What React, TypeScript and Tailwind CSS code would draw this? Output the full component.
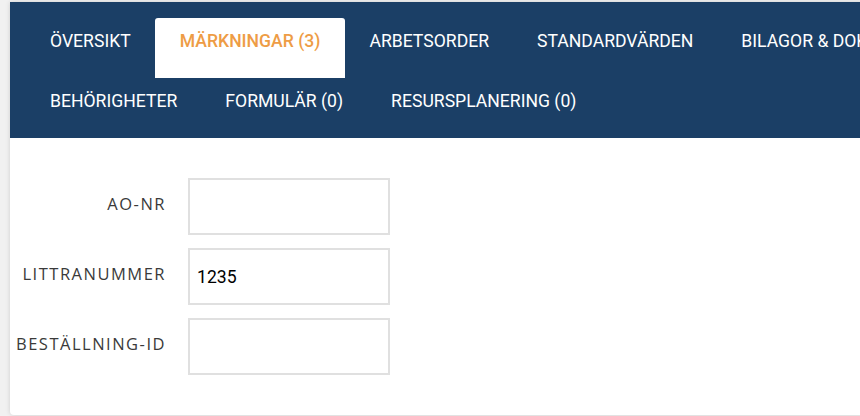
const TABS = [
  { label: 'ÖVERSIKT' },
  { label: 'MÄRKNINGAR (3)', active: true },
  { label: 'ARBETSORDER' },
  { label: 'STANDARDVÄRDEN' },
  { label: 'BILAGOR & DOKUMENT (2)' },
  { label: 'BEHÖRIGHETER' },
  { label: 'FORMULÄR (0)' },
  { label: 'RESURSPLANERING (0)' },
]

const FIELDS = [
  { label: 'AO-NR', value: '' },
  { label: 'LITTRANUMMER', value: '1235' },
  { label: 'BESTÄLLNING-ID', value: '' },
]

export default function App() {
  return (
    <div className="w-[860px] h-[416px] overflow-hidden bg-[#f1f1f1] pt-[2px] pl-[10px]">
      <div className="w-[1100px] h-[413px] bg-white rounded-b-[4px] shadow-[0_0_5px_rgba(0,0,0,0.14)]">
        {/* Tab header */}
        <div className="bg-[#1b3f66] px-4 pt-4 flex flex-wrap font-['Roboto',sans-serif] text-[17.6px] leading-6">
          {TABS.map((tab) => (
            <div
              key={tab.label}
              className={
                tab.active
                  ? 'h-[60px] px-[25px] pt-[11px] bg-white rounded-t-[3px] text-[#ee9c45] font-medium whitespace-nowrap'
                  : 'h-[60px] px-6 pt-[11px] text-white whitespace-nowrap'
              }
            >
              {tab.label}
            </div>
          ))}
        </div>

        {/* Form */}
        <div className="pt-10 flex flex-col gap-[13px]">
          {FIELDS.map((field) => (
            <div key={field.label} className="flex items-center">
              <label className="w-[156px] pb-[5px] text-right font-['Open_Sans',sans-serif] text-[16.5px] tracking-[1.5px] text-[#3a3a3a]">
                {field.label}
              </label>
              <input
                defaultValue={field.value}
                className="ml-[22px] w-[202px] h-[57px] border-2 border-[#e0e0e0] px-[7px] font-['Roboto',sans-serif] text-[17.6px] text-black outline-none"
              />
            </div>
          ))}
        </div>
      </div>
    </div>
  )
}
